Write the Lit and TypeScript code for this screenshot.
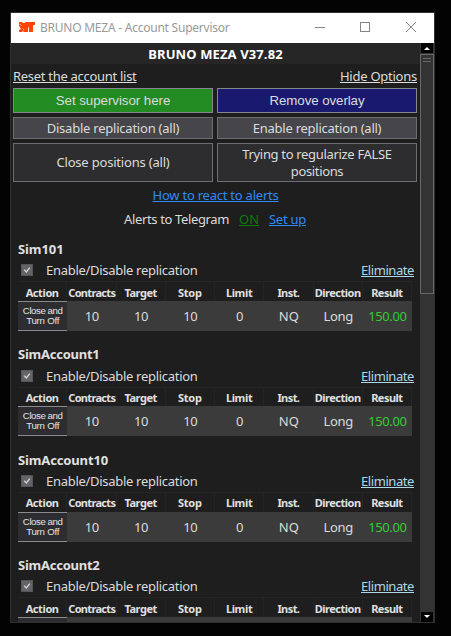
import { LitElement, html, css, nothing } from "lit";
import { customElement, property } from "lit/decorators.js";

/** A single line of text tracked so that it spans a given width. */
@customElement("fit-text")
class FitText extends LitElement {
  @property() text = "";
  @property({ type: Number }) span = 0;

  static styles = css`
    :host { display: inline-block; white-space: pre; text-decoration: inherit; text-underline-offset: inherit; }
    .t { display: inline-block; text-decoration: inherit; text-underline-offset: inherit; }
  `;

  firstUpdated() {
    const el = this.renderRoot.querySelector(".t") as HTMLElement;
    const natural = el.getBoundingClientRect().width;
    if (this.span && natural) {
      const gap = (this.span - natural) / this.text.length;
      el.style.letterSpacing = gap.toFixed(3) + "px";
    }
  }

  render() {
    return html`<span class="t">${this.text}</span>`;
  }
}

const fit = (text: string, span: number) =>
  html`<fit-text .text=${text} .span=${span}></fit-text>`;

const COLUMNS: [string, number][] = [
  ["Action", 33], ["Contracts", 47], ["Target", 32.5], ["Stop", 24],
  ["Limit", 26.5], ["Inst.", 22], ["Direction", 46], ["Result", 31.5],
];
const VALUES: [string, number][] = [
  ["10", 14.5], ["10", 14.5], ["10", 14.5], ["0", 7.5], ["NQ", 20.5], ["Long", 29.5], ["150.00", 38.5],
];

@customElement("account-panel")
class AccountPanel extends LitElement {
  @property() name = "";
  @property({ type: Number }) span = 0;
  @property({ type: Boolean }) folded = false;

  static styles = css`
    :host { display: block; height: 105.33px; flex: none; box-sizing: border-box; padding-left: 7px; }
    .name { height: 22.4px; line-height: 22px; font-weight: 700; font-size: 13px; color: #e0e0e0; }
    .opts { display: flex; align-items: center; height: 20px; width: 396px; margin-bottom: 1px; color: #dcdcdc; }
    .check { width: 12px; height: 12px; margin-left: 3px; background: #646468; display: block; flex: none; }
    .label { margin-left: 13px; flex: 1; }
    .del { color: #add8e6; text-decoration: underline; text-underline-offset: 1px; }
    .head, .row { display: grid; grid-template-columns: repeat(8, 49.25px); width: 394px; }
    .head { height: 19.6px; box-sizing: border-box; border-top: 1px solid #252525; }
    .head div { display: flex; align-items: center; justify-content: center; overflow: hidden; padding-top: 1px;
      font-size: 11px; font-weight: 700; color: #e0e0e0; line-height: 17px; border-right: 1px solid #242424; box-sizing: border-box; }
    .head div.clip { justify-content: flex-start; padding-left: 1px; }
    .row { height: 30px; background: #3b3b3b; }
    .cell { display: flex; align-items: center; justify-content: center; color: #dcdcdc; font-size: 13px; }
    .cell.gain { color: #32cd32; }
    .act { box-sizing: border-box; background: #2d2d31; border-top: 1px solid #8a8a8e; border-bottom: 1px solid #8a8a8e;
      display: flex; flex-direction: column; align-items: center; justify-content: center;
      font: 9.7px/10px "Liberation Sans", Arial, sans-serif; color: #e4e4e4; }
  `;

  render() {
    return html`
      <div class="name">${fit(this.name, this.span)}</div>
      <div class="opts">
        <svg class="check" viewBox="0 0 12 12"><rect x=".5" y=".5" width="11" height="11" fill="none" stroke="#55555a"/><path d="M3.2 5.6 5.3 8 8.8 3.6" fill="none" stroke="#d4d4d4" stroke-width="1.4"/></svg>
        <span class="label">${fit("Enable/Disable replication", 151.5)}</span>
        <span class="del">${fit("Eliminate", 53)}</span>
      </div>
      <div class="head">
        ${COLUMNS.map(([t, w], i) => html`<div class=${i === 1 ? "clip" : ""}>${fit(t, w)}</div>`)}
      </div>
      <div class="row">
        <div class="act">${this.folded ? nothing : html`${fit("Close and", 39.5)}${fit("Turn Off", 33)}`}</div>
        ${this.folded ? nothing : VALUES.map(([t, w], i) => html`<div class="cell ${i === 6 ? "gain" : ""}">${fit(t, w)}</div>`)}
      </div>
    `;
  }
}

const ACCOUNTS: [string, number][] = [
  ["Sim101", 45.5], ["SimAccount1", 81.5], ["SimAccount10", 90], ["SimAccount2", 81.5],
];

@customElement("app-root")
class AppRoot extends LitElement {
  static styles = css`
    :host { display: block; box-sizing: border-box; width: 451px; height: 636px; padding: 12px 16px 13px 10px;
      background: #030303; overflow: hidden; font-family: "Noto Sans", "Open Sans", sans-serif; font-size: 13px; color: #dcdcdc; }
    .window { box-sizing: border-box; width: 425px; height: 611px; border: 1px solid #303030; background: #1e1e1e;
      display: flex; flex-direction: column; overflow: hidden; }
    .bar { height: 30px; flex: none; background: #fff; display: flex; align-items: center; padding-left: 8px; }
    .logo { width: 16px; height: 10px; display: block; margin-top: -2px; }
    .title { margin-left: 5px; flex: 1; font-size: 12px; color: #999; margin-top: -1px; }
    .ctrl { width: 136px; height: 30px; display: block; }
    .body { flex: 1; display: flex; min-height: 0; }
    .content { width: 409px; overflow: hidden; display: flex; flex-direction: column; }
    .heading { flex: none; height: 21px; background: #262626; color: #fff; font-weight: 700; text-align: center; line-height: 22px; }
    .links { flex: none; display: flex; justify-content: space-between; padding: 2px 3px 0 2px; height: 22px; line-height: 21px; }
    .links span { text-decoration: underline; text-underline-offset: 1px; }
    .buttons { flex: none; display: grid; grid-template-columns: 200px 200px; grid-template-rows: 25px 22px 39px;
      column-gap: 4px; row-gap: 4px; padding-left: 2px; }
    .btn { box-sizing: border-box; border: 1px solid #6e6e70; background: #2d2d30; display: flex; flex-direction: column;
      align-items: center; justify-content: center; line-height: 17px; color: #dcdcdc; }
    .mid { background: #45454a; }
    .go, .navy { font-family: "Liberation Sans", Arial, sans-serif; font-size: 13.3px; border-color: #868690; }
    .go { background: #228b22; }
    .navy { background: #191970; }
    .howto { flex: none; height: 26px; line-height: 26px; text-align: center; }
    .howto span, .setup { color: #2f8af5; text-decoration: underline; text-underline-offset: 1px; }
    .alerts { flex: none; height: 30px; line-height: 22px; padding-left: 113px; display: flex; }
    .on { color: #0c7a0c; text-decoration: underline; text-underline-offset: 1px; margin: 0 10px; }
    .scroll { width: 14px; display: flex; flex-direction: column; background: #333; }
    .arrow { background: #000; height: 10px; width: 12px; margin-left: 1px; display: block; flex: none; }
    .thumb { box-sizing: border-box; height: 240px; border: 1px solid #686868; background: #333;
      padding: 3px 2px; flex: none; margin-top: 1px; }
    .grip { height: 4px; border-top: 1px solid #686868; border-bottom: 1px solid #686868; box-sizing: border-box; }
    .rest { flex: 1; }
  `;

  render() {
    return html`
      <div class="window">
        <div class="bar">
          <svg class="logo" viewBox="0 0 16 10"><path d="M0 0H3L4 1H6V0H16V3H14V10H10V6L9 5V10H5L4 9L3 10H0V8L2 7L0 4Z" fill="#ff4500"/><path d="M.5 2.2 2.5 3.5M3.5 6.5 5 8" stroke="#fff" stroke-width=".6"/></svg>
          <span class="title">${fit("BRUNO MEZA - Account Supervisor", 189.5)}</span>
          <svg class="ctrl" viewBox="0 0 136 30" fill="none" stroke="#858585"><path d="M17 14.5H27"/><rect x="62.5" y="9.5" width="9" height="9"/><path d="M108 9 118 19M118 9 108 19"/></svg>
        </div>
        <div class="body">
          <div class="content">
            <div class="heading">${fit("BRUNO MEZA V37.82", 134.5)}</div>
            <div class="links"><span>${fit("Reset the account list", 123.5)}</span><span>${fit("Hide Options", 77)}</span></div>
            <div class="buttons">
              <div class="btn go">${fit("Set supervisor here", 114.5)}</div>
              <div class="btn navy">${fit("Remove overlay", 95)}</div>
              <div class="btn mid">${fit("Disable replication (all)", 132.5)}</div>
              <div class="btn mid">${fit("Enable replication (all)", 128.5)}</div>
              <div class="btn">${fit("Close positions (all)", 113)}</div>
              <div class="btn">${fit("Trying to regularize FALSE", 149.5)}${fit("positions", 52.5)}</div>
            </div>
            <div class="howto"><span>${fit("How to react to alerts", 126)}</span></div>
            <div class="alerts">${fit("Alerts to Telegram", 105)}<span class="on">${fit("ON", 20)}</span><span class="setup">${fit("Set up", 37)}</span></div>
            ${ACCOUNTS.map(([n, w], i) => html`<account-panel .name=${n} .span=${w} .folded=${i === ACCOUNTS.length - 1}></account-panel>`)}
          </div>
          <div class="scroll">
            <svg class="arrow" viewBox="0 0 12 10"><path d="M3 7 6 4 9 7Z" fill="#fff"/></svg>
            <div class="thumb"><div class="grip"></div></div>
            <div class="rest"></div>
            <svg class="arrow" viewBox="0 0 12 10"><path d="M3 3 6 6 9 3Z" fill="#fff"/></svg>
          </div>
        </div>
      </div>
    `;
  }
}
